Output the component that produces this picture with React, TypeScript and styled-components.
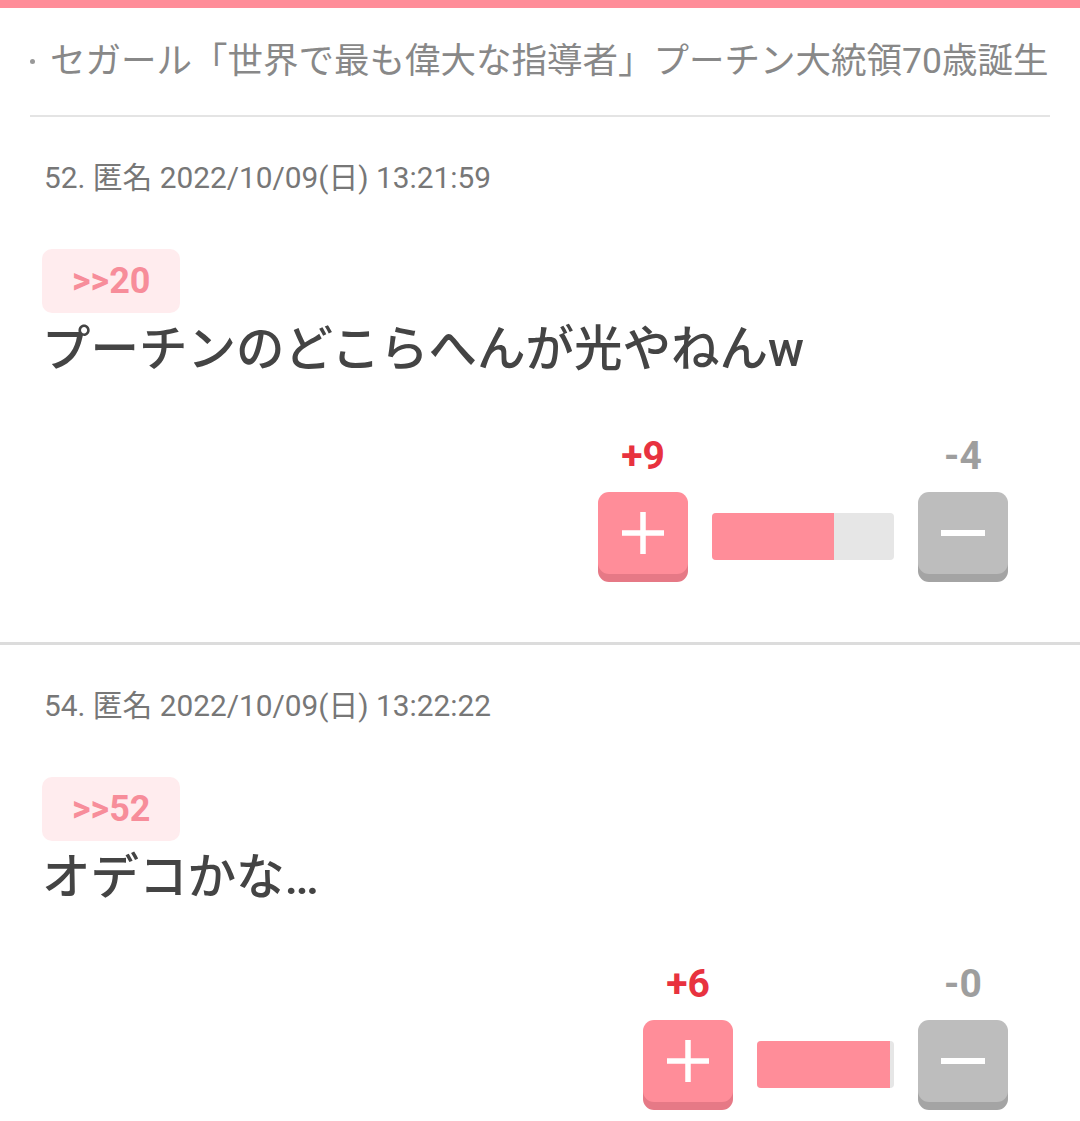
import React from 'react'
import styled, { createGlobalStyle } from 'styled-components'

const GlobalStyle = createGlobalStyle`
  body {
    margin: 0;
    background: #ffffff;
    font-family: Roboto, "Noto Sans CJK JP", sans-serif;
  }
`

const TopBar = styled.div`
  height: 8px;
  background: #ff8d99;
`

const TitleRow = styled.div`
  display: flex;
  align-items: center;
  height: 107px;
  margin: 0 30px;
  border-bottom: 2px solid #e4e4e4;
  overflow: hidden;
  white-space: nowrap;
`

const TitleDot = styled.span`
  flex: none;
  width: 5px;
  height: 5px;
  border-radius: 50%;
  background: #999;
  margin-right: 15px;
`

const TitleText = styled.span`
  font-size: 35.5px;
  color: #888888;
  line-height: 1;
`

const Post = styled.article`
  padding: 43px 72px 60px 42px;
  border-bottom: 3px solid #dcdcdc;
`

const Meta = styled.div`
  margin-left: 2px;
  font-size: 29.8px;
  line-height: 36px;
  color: #777777;
`

const Anchor = styled.span`
  display: inline-flex;
  align-items: center;
  height: 64px;
  margin-top: 53px;
  padding: 0 30px;
  border-radius: 10px;
  background: #ffecee;
  color: #f78d9a;
  font-size: 36px;
  font-weight: 700;
`

const Body = styled.div`
  margin-top: 7px;
  font-size: 48.5px;
  line-height: 60px;
  font-weight: 500;
  color: #444444;
`

const Votes = styled.div`
  display: flex;
  justify-content: flex-end;
  align-items: flex-end;
  margin-top: 56px;
`

const VoteCol = styled.div`
  display: flex;
  flex-direction: column;
  align-items: center;
  gap: 16px;
`

const VoteCount = styled.span<{ $good?: boolean }>`
  font-size: 39px;
  line-height: 40px;
  font-weight: 700;
  color: ${(p) => (p.$good ? '#e8323f' : '#9e9e9e')};
`

const VoteButton = styled.button<{ $good?: boolean }>`
  display: flex;
  align-items: center;
  justify-content: center;
  width: 90px;
  height: 82px;
  margin-bottom: 8px;
  padding: 0;
  border: none;
  border-radius: 11px;
  background: ${(p) => (p.$good ? '#ff8d99' : '#bdbdbd')};
  box-shadow: 0 8px 0 ${(p) => (p.$good ? '#e67986' : '#a4a4a4')};
  cursor: pointer;
`

const Track = styled.div<{ $width: number }>`
  width: ${(p) => p.$width}px;
  height: 47px;
  margin: 0 24px 22px;
  border-radius: 4px;
  background: #e6e6e6;
  overflow: hidden;
`

const Fill = styled.div`
  height: 100%;
  background: #ff8d99;
`

const PlusIcon = () => (
  <svg width="44" height="44" viewBox="0 0 44 44">
    <path d="M22 1v42M1 22h42" stroke="#fff" strokeWidth="5.5" />
  </svg>
)

const MinusIcon = () => (
  <svg width="46" height="44" viewBox="0 0 46 44">
    <path d="M1 22h44" stroke="#fff" strokeWidth="6" />
  </svg>
)

interface Res {
  no: number
  time: string
  anchor: string
  body: string
  plus: number
  minus: number
  barWidth: number
}

const posts: Res[] = [
  {
    no: 52,
    time: '2022/10/09(日) 13:21:59',
    anchor: '>>20',
    body: 'プーチンのどこらへんが光やねんw',
    plus: 9,
    minus: 4,
    barWidth: 182,
  },
  {
    no: 54,
    time: '2022/10/09(日) 13:22:22',
    anchor: '>>52',
    body: 'オデコかな…',
    plus: 6,
    minus: 0,
    barWidth: 137,
  },
]

const ResItem = ({ res }: { res: Res }) => {
  const total = res.plus + res.minus
  const ratio = total ? res.plus / total : 0.5
  return (
    <Post>
      <Meta>
        {res.no}. 匿名 {res.time}
      </Meta>
      <Anchor>{res.anchor}</Anchor>
      <Body>{res.body}</Body>
      <Votes>
        <VoteCol>
          <VoteCount $good>+{res.plus}</VoteCount>
          <VoteButton $good aria-label="plus">
            <PlusIcon />
          </VoteButton>
        </VoteCol>
        <Track $width={res.barWidth}>
          <Fill style={{ width: `${ratio * 97}%` }} />
        </Track>
        <VoteCol>
          <VoteCount>-{res.minus}</VoteCount>
          <VoteButton aria-label="minus">
            <MinusIcon />
          </VoteButton>
        </VoteCol>
      </Votes>
    </Post>
  )
}

export default function App() {
  return (
    <>
      <GlobalStyle />
      <TopBar />
      <TitleRow>
        <TitleDot />
        <TitleText>セガール「世界で最も偉大な指導者」プーチン大統領70歳誕生</TitleText>
      </TitleRow>
      {posts.map((res) => (
        <ResItem key={res.no} res={res} />
      ))}
    </>
  )
}
